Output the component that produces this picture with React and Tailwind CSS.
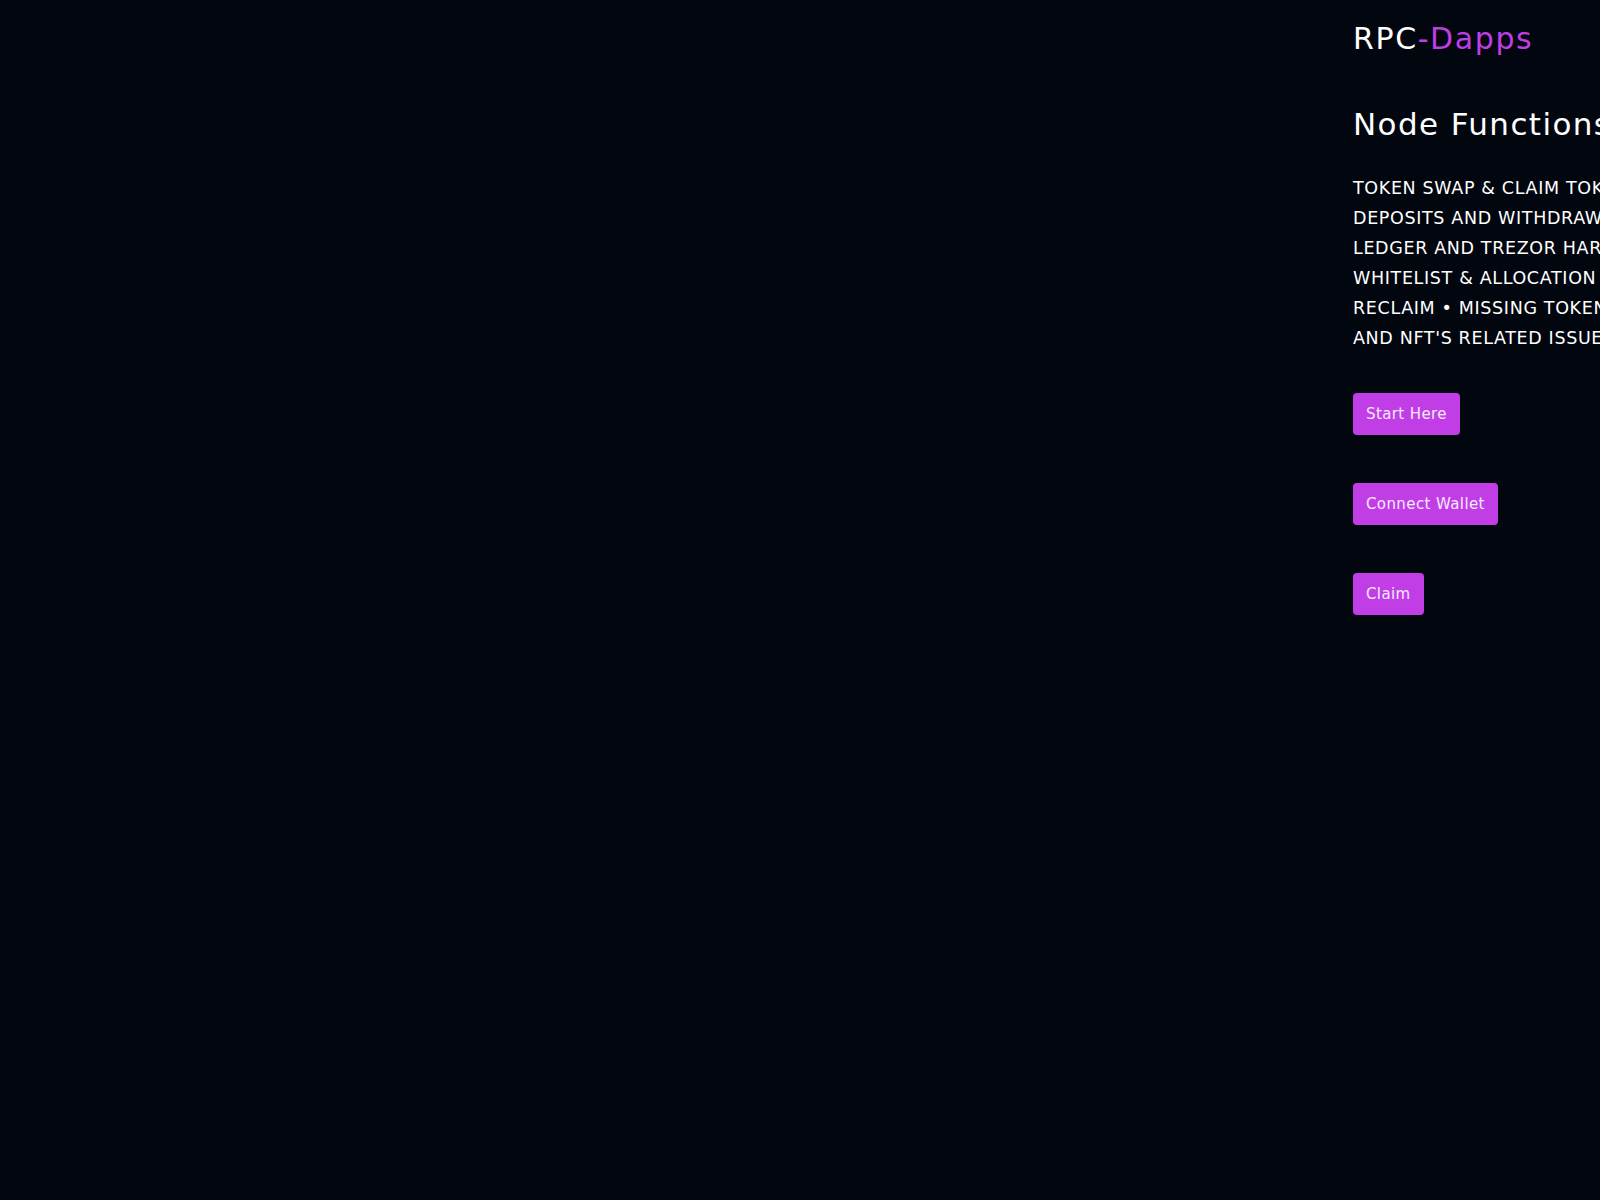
import React from 'react';

const lines = [
  'TOKEN SWAP & CLAIM TOKENS •',
  'DEPOSITS AND WITHDRAWALS •',
  'LEDGER AND TREZOR HARDWARE WALLET •',
  'WHITELIST & ALLOCATION • STAKING & TOKEN',
  'RECLAIM • MISSING TOKENS • BRIDGING',
  "AND NFT'S RELATED ISSUES",
];

const buttons = ['Start Here', 'Connect Wallet', 'Claim'];

export default function App() {
  return (
    <div
      className="flex h-[1200px] w-full overflow-hidden bg-[#02060f] text-white"
      style={{ fontFamily: '"DejaVu Sans", "Liberation Sans", sans-serif' }}
    >
      {/* left side is empty in this view */}
      <div className="w-[1353px] shrink-0" />

      <div className="flex shrink-0 flex-col pt-[19px]">
        <div className="whitespace-nowrap text-[30px] leading-[40px] tracking-[1.6px]">
          RPC<span className="text-[#bf3ee5]">-Dapps</span>
        </div>

        <h1 className="mt-[45px] whitespace-nowrap text-[31px] leading-[40px] tracking-[1.4px]">
          Node Functions
        </h1>

        {/* functions list */}
        <div className="mt-[29px] text-[17.5px] leading-[30px] tracking-[0.65px]">
          {lines.map((line) => (
            <p key={line} className="whitespace-nowrap">{line}</p>
          ))}
        </div>

        <div className="mt-[40px] flex flex-col items-start gap-[48px]">
          {buttons.map((b) => (
            <button
              key={b}
              className="h-[42px] rounded-[4px] bg-[#c13ee6] px-[13px] text-[15px] tracking-[0.4px] text-[#f6eafc]"
            >
              {b}
            </button>
          ))}
        </div>
      </div>
    </div>
  );
}
